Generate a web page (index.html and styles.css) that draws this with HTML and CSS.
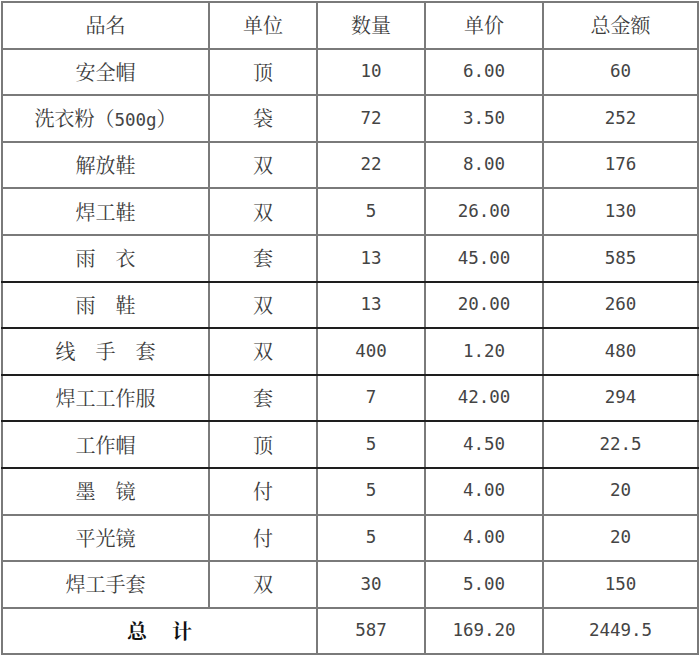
FILE: index.html
```html
<!DOCTYPE html>
<html lang="zh-CN">
<head>
<meta charset="utf-8">
<title>劳保用品清单</title>
<link rel="stylesheet" href="styles.css">
</head>
<body>
<table class="sheet">
  <colgroup>
    <col class="c-name"><col class="c-unit"><col class="c-qty"><col class="c-price"><col class="c-total">
  </colgroup>
  <thead>
    <tr><th>品名</th><th>单位</th><th>数量</th><th>单价</th><th>总金额</th></tr>
  </thead>
  <tbody>
    <tr><td>安全帽</td><td>顶</td><td class="num">10</td><td class="num">6.00</td><td class="num">60</td></tr>
    <tr><td>洗衣粉（<span class="num">500g</span>）</td><td>袋</td><td class="num">72</td><td class="num">3.50</td><td class="num">252</td></tr>
    <tr><td>解放鞋</td><td>双</td><td class="num">22</td><td class="num">8.00</td><td class="num">176</td></tr>
    <tr><td>焊工鞋</td><td>双</td><td class="num">5</td><td class="num">26.00</td><td class="num">130</td></tr>
    <tr class="dark"><td>雨　衣</td><td>套</td><td class="num">13</td><td class="num">45.00</td><td class="num">585</td></tr>
    <tr class="dark"><td>雨　鞋</td><td>双</td><td class="num">13</td><td class="num">20.00</td><td class="num">260</td></tr>
    <tr class="dark"><td>线　手　套</td><td>双</td><td class="num">400</td><td class="num">1.20</td><td class="num">480</td></tr>
    <tr class="dark"><td>焊工工作服</td><td>套</td><td class="num">7</td><td class="num">42.00</td><td class="num">294</td></tr>
    <tr class="dark"><td>工作帽</td><td>顶</td><td class="num">5</td><td class="num">4.50</td><td class="num">22.5</td></tr>
    <tr><td>墨　镜</td><td>付</td><td class="num">5</td><td class="num">4.00</td><td class="num">20</td></tr>
    <tr><td>平光镜</td><td>付</td><td class="num">5</td><td class="num">4.00</td><td class="num">20</td></tr>
    <tr><td>焊工手套</td><td>双</td><td class="num">30</td><td class="num">5.00</td><td class="num">150</td></tr>
  </tbody>
  <tfoot>
    <tr><td colspan="2" class="sum-label">总　 计</td><td class="num">587</td><td class="num">169.20</td><td class="num">2449.5</td></tr>
  </tfoot>
</table>
</body>
</html>
```

FILE: styles.css
```css
html, body {
  margin: 0;
  padding: 0;
  background: #ffffff;
}

.sheet {
  border-collapse: collapse;
  table-layout: fixed;
  width: 698px;
  margin: 1px 0 0 1px;
  font-family: "Noto Serif CJK SC", "Noto Sans CJK SC", serif;
  font-size: 20px;
  color: #3c3c3c;
}

.c-name { width: 207px; }
.c-unit { width: 108px; }
.c-qty { width: 108px; }
.c-price { width: 118px; }
.c-total { width: 155px; }

.sheet th,
.sheet td {
  border: 2px solid #7a7a7a;
  height: 44.6px;
  padding: 0;
  text-align: center;
  vertical-align: middle;
  font-weight: normal;
  line-height: 1;
  white-space: nowrap;
}

.sheet tr.dark > td {
  border-bottom-color: #1e1e1e;
}

.num {
  font-family: "DejaVu Sans Mono", "Liberation Mono", monospace;
  font-size: 17.5px;
  color: #444444;
}

.sheet td.sum-label {
  font-weight: bold;
  color: #111111;
}
```
